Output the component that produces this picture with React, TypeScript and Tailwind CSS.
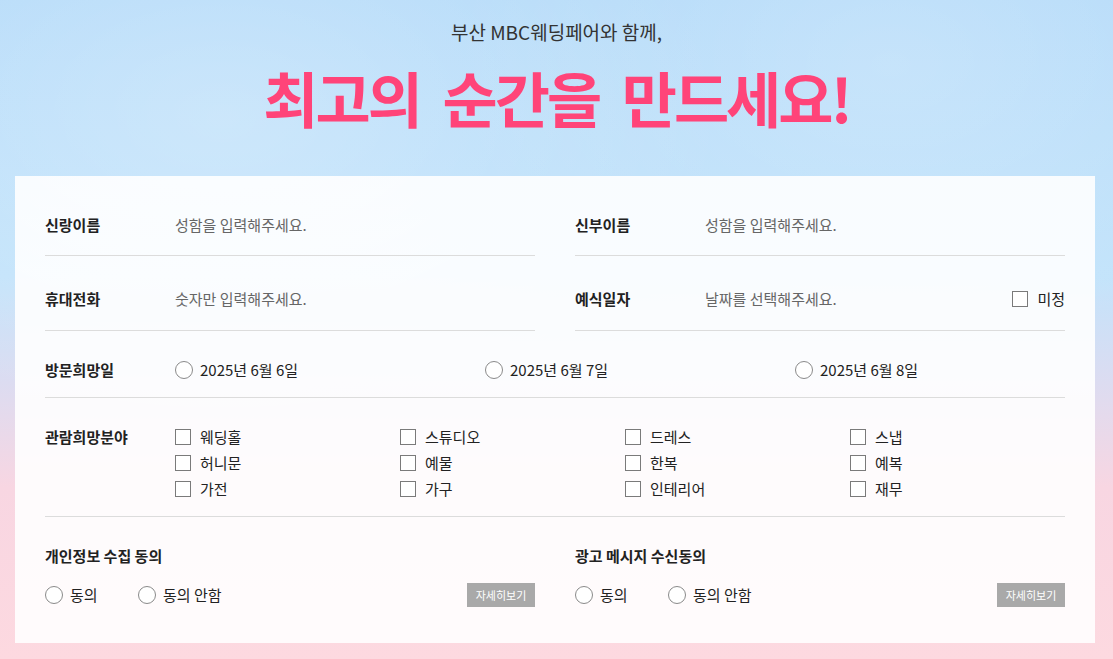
import { ReactNode } from 'react';

const visitDays = ['2025년 6월 6일', '2025년 6월 7일', '2025년 6월 8일'];

const fields = [
    '웨딩홀', '스튜디오', '드레스', '스냅',
    '허니문', '예물', '한복', '예복',
    '가전', '가구', '인테리어', '재무',
];

function Radio({ label }: { label: string }) {
    return (
        <label className="flex items-center gap-[7px] text-[#222]">
            <span className="w-[18px] h-[18px] rounded-full border border-[#8a8a8a] bg-white shrink-0"></span>
            <span>{label}</span>
        </label>
    );
}

function Check({ label }: { label: string }) {
    return (
        <label className="flex items-center gap-[9px] text-[#222]">
            <span className="w-[16px] h-[16px] border border-[#7a7a7a] bg-white shrink-0"></span>
            <span>{label}</span>
        </label>
    );
}

function Field({ label, placeholder, className, children }: { label: string; placeholder: string; className: string; children?: ReactNode }) {
    return (
        <div className={'flex items-center border-b border-[#dcdcdc] leading-[24px] ' + className}>
            <div className="w-[130px] shrink-0 font-bold text-[#222]">{label}</div>
            <input
                className="flex-1 min-w-0 bg-transparent outline-none leading-[24px] placeholder:text-[#666]"
                placeholder={placeholder}
            />
            {children}
        </div>
    );
}

function Agree({ title }: { title: string }) {
    return (
        <div>
            <div className="font-bold text-[#222] leading-[24px]">{title}</div>
            <div className="flex items-center mt-[15px] h-[24px]">
                <div className="w-[93px]"><Radio label="동의" /></div>
                <Radio label="동의 안함" />
                <button className="ml-auto w-[68px] h-[24px] bg-[#a9a9a9] text-white text-[11px]">자세히보기</button>
            </div>
        </div>
    );
}

export default function App() {
    return (
        <div
            className="min-h-[659px] w-full overflow-hidden font-['Noto_Sans_CJK_KR',sans-serif] bg-[radial-gradient(ellipse_at_20%_18%,rgba(255,255,255,0.25),transparent_40%),radial-gradient(ellipse_at_80%_10%,rgba(255,255,255,0.2),transparent_35%),linear-gradient(180deg,#b5dbf9_0%,#c2e3fb_42%,#dcdcf1_58%,#f8d6e2_74%,#fdd9e0_100%)]"
        >
            <div className="pt-[19px] text-center">
                <div className="text-[19px] leading-[26px] text-[#333]">부산 MBC웨딩페어와 함께,</div>
                <h1 className="mt-[17px] text-[60px] leading-[70px] font-bold text-[#ff4479] tracking-[-3px] [word-spacing:12px]">최고의 순간을 만드세요!</h1>
            </div>

            <div className="mt-[44px] ml-[15px] w-[1080px] bg-white/90 px-[30px] pb-[36px] text-[15px]">
                <div className="grid grid-cols-2 gap-x-[40px]">
                    <Field label="신랑이름" placeholder="성함을 입력해주세요." className="pt-[37px] pb-[18px]" />
                    <Field label="신부이름" placeholder="성함을 입력해주세요." className="pt-[37px] pb-[18px]" />
                    <Field label="휴대전화" placeholder="숫자만 입력해주세요." className="pt-[31px] pb-[19px]" />
                    <Field label="예식일자" placeholder="날짜를 선택해주세요." className="pt-[31px] pb-[19px]">
                        <Check label="미정" />
                    </Field>
                </div>

                <div className="flex items-center border-b border-[#dcdcdc] pt-[27px] pb-[15px] leading-[24px]">
                    <div className="w-[130px] shrink-0 font-bold text-[#222]">방문희망일</div>
                    <div className="flex-1 grid grid-cols-[310px_310px_1fr]">
                        {visitDays.map((day) => (
                            <Radio key={day} label={day} />
                        ))}
                    </div>
                </div>

                <div className="flex border-b border-[#dcdcdc] pt-[26px] pb-[14px] leading-[26px]">
                    <div className="w-[130px] shrink-0 font-bold text-[#222]">관람희망분야</div>
                    <div className="flex-1 grid grid-cols-[225px_225px_225px_1fr]">
                        {fields.map((field) => (
                            <Check key={field} label={field} />
                        ))}
                    </div>
                </div>

                <div className="grid grid-cols-2 gap-x-[40px] pt-[27px]">
                    <Agree title="개인정보 수집 동의" />
                    <Agree title="광고 메시지 수신동의" />
                </div>
            </div>
        </div>
    );
}
